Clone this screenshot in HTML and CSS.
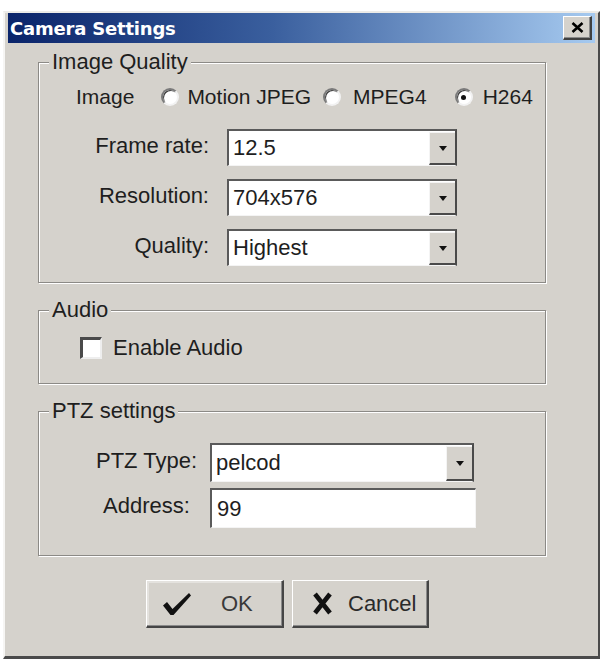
FILE: index.html
```html
<!DOCTYPE html>
<html lang="en">
<head>
<meta charset="utf-8">
<title>Camera Settings</title>
<link rel="stylesheet" href="styles.css">
</head>
<body>
<div class="dialog">
  <div class="titlebar">
    <span class="title">Camera Settings</span>
    <div class="close">
      <svg width="13" height="11" viewBox="0 0 13 11"><path d="M1.5 1 L11.5 10 M11.5 1 L1.5 10" stroke="#000" stroke-width="2.6" fill="none"/></svg>
    </div>
  </div>
  <div class="body">
    <fieldset class="group g-image">
      <legend>Image Quality</legend>
      <div class="radio-row">
        <span class="lbl-image">Image</span>
        <span class="radio r1"></span><span class="rtext t1">Motion JPEG</span>
        <span class="radio r2"></span><span class="rtext t2">MPEG4</span>
        <span class="radio r3 checked"></span><span class="rtext t3">H264</span>
      </div>
      <div class="form-row first">
        <span class="label">Frame rate:</span>
        <div class="select s-img"><span class="value">12.5</span><span class="drop"><i class="arrow"></i></span></div>
      </div>
      <div class="form-row">
        <span class="label">Resolution:</span>
        <div class="select s-img"><span class="value">704x576</span><span class="drop"><i class="arrow"></i></span></div>
      </div>
      <div class="form-row">
        <span class="label">Quality:</span>
        <div class="select s-img"><span class="value">Highest</span><span class="drop"><i class="arrow"></i></span></div>
      </div>
    </fieldset>

    <fieldset class="group g-audio">
      <legend>Audio</legend>
      <div class="check-row">
        <span class="checkbox"></span><span class="ctext">Enable Audio</span>
      </div>
    </fieldset>

    <fieldset class="group g-ptz">
      <legend>PTZ settings</legend>
      <div class="ptz-row first">
        <span class="plabel">PTZ Type:</span>
        <div class="select s-ptz"><span class="value">pelcod</span><span class="drop"><i class="arrow"></i></span></div>
      </div>
      <div class="ptz-row second">
        <span class="plabel">Address:</span>
        <div class="textbox"><span class="value">99</span></div>
      </div>
    </fieldset>

    <div class="buttons">
      <div class="btn ok">
        <svg class="ico-check" width="32" height="26" viewBox="0 0 32 26"><path d="M2 14.5 L6 11 L11.5 18 L28 2 L30 4.5 L12.5 24 L9.5 24 Z" fill="#111"/></svg>
        <span class="btext ok-text">OK</span>
      </div>
      <div class="btn cancel">
        <svg class="ico-x" width="21" height="23" viewBox="0 0 21 23"><path d="M3 2 L18 21 M18 2 L3 21" stroke="#111" stroke-width="4.6" fill="none"/></svg>
        <span class="btext cancel-text">Cancel</span>
      </div>
    </div>
  </div>
</div>
</body>
</html>
```
FILE: styles.css
```css
html, body {
  margin: 0;
  padding: 0;
  background: #ffffff;
}
body {
  font-family: "Liberation Sans", Arial, sans-serif;
  font-size: 22px;
  color: #1e1e1e;
}
.dialog {
  box-sizing: border-box;
  margin: 11px 0 0 3px;
  width: 597px;
  height: 648px;
  background: #d5d2cc;
  border-top: 2px solid #ecebe8;
  border-left: 2px solid #f6f5f3;
  border-right: 2px solid #4a4a4a;
  border-bottom: 3px solid #4a4a4a;
  padding: 0 3px;
  display: flex;
  flex-direction: column;
}
.titlebar {
  height: 30px;
  flex: none;
  display: flex;
  align-items: center;
  justify-content: space-between;
  background: linear-gradient(to right, #0a246a 0%, #3a5f9e 45%, #a6caf0 100%);
  padding: 0 3px 0 2px;
}
.title {
  font-family: "DejaVu Sans", Verdana, sans-serif;
  font-weight: bold;
  font-size: 18px;
  letter-spacing: -0.2px;
  color: #ffffff;
}
.close {
  box-sizing: border-box;
  width: 29px;
  height: 24px;
  background: #d5d2cc;
  border-top: 1px solid #ffffff;
  border-left: 1px solid #ffffff;
  border-right: 2px solid #404040;
  border-bottom: 2px solid #404040;
  box-shadow: inset -1px -1px 0 #8a8a8a;
  display: flex;
  align-items: center;
  justify-content: center;
}
.body {
  padding: 8px 49px 0 30px;
  display: flex;
  flex-direction: column;
}
.group {
  margin: 0;
  padding: 0;
  min-width: 0;
  border: 1px solid #8c8a86;
  box-shadow: 1px 1px 0 #ffffff, inset 1px 1px 0 #ffffff;
}
.group legend {
  margin-left: 10px;
  padding: 0 3px;
  line-height: 22px;
  background: #d5d2cc;
}
.g-image {
  padding: 10px 0 16px 0;
}
.g-audio {
  margin-top: 16px;
  padding: 15px 0 24px 0;
}
.g-ptz {
  margin-top: 16px;
  padding: 21px 0 27px 0;
}
.radio-row {
  display: flex;
  align-items: center;
  height: 28px;
  padding-left: 37px;
  font-size: 21px;
}
.radio {
  box-sizing: border-box;
  flex: none;
  width: 18px;
  height: 18px;
  border-radius: 50%;
  background: #ffffff;
  border: 2px solid;
  border-color: #7a7a7a #f2f2f2 #f2f2f2 #7a7a7a;
  box-shadow: inset 1px 1px 0 #3c3c3c;
  display: flex;
  align-items: center;
  justify-content: center;
}
.radio.checked::after {
  content: "";
  width: 5px;
  height: 5px;
  border-radius: 50%;
  background: #111;
}
.r1 { margin-left: 27px; }
.t1 { margin-left: 8px; }
.r2 { margin-left: 12px; }
.t2 { margin-left: 12px; }
.r3 { margin-left: 28px; }
.t3 { margin-left: 10px; }
.form-row {
  display: flex;
  align-items: center;
  margin-top: 13px;
}
.form-row.first {
  margin-top: 18px;
}
.label {
  width: 170px;
  text-align: right;
  padding-bottom: 4px;
}
.select {
  box-sizing: border-box;
  height: 37px;
  background: #ffffff;
  border-top: 2px solid #5a5a5a;
  border-left: 2px solid #5a5a5a;
  border-right: 2px solid #4a4a4a;
  border-bottom: 1px solid #f4f4f4;
  display: flex;
  align-items: stretch;
}
.s-img {
  width: 230px;
  margin-left: 18px;
}
.value {
  flex: 1;
  display: flex;
  align-items: center;
  padding-left: 4px;
}
.drop {
  box-sizing: border-box;
  width: 26px;
  margin: 1px 0 0 0;
  background: #d5d2cc;
  border-top: 1px solid #f4f4f4;
  border-left: 1px solid #f4f4f4;
  border-bottom: 2px solid #4a4a4a;
  display: flex;
  align-items: center;
  justify-content: center;
}
.arrow {
  width: 0;
  height: 0;
  border-left: 4px solid transparent;
  border-right: 4px solid transparent;
  border-top: 5px solid #111;
}
.check-row {
  display: flex;
  align-items: center;
  height: 23px;
  padding-left: 41px;
}
.checkbox {
  box-sizing: border-box;
  width: 22px;
  height: 22px;
  background: #ffffff;
  border-top: 3px solid #4a4a4a;
  border-left: 3px solid #4a4a4a;
  border-right: 2px solid #eeeeee;
  border-bottom: 2px solid #eeeeee;
}
.ctext {
  margin-left: 11px;
}
.ptz-row {
  display: flex;
  align-items: center;
}
.ptz-row.second {
  margin-top: 6px;
}
.plabel {
  margin-left: 54px;
  width: 107px;
  text-align: center;
  padding-bottom: 4px;
}
.s-ptz {
  width: 264px;
  height: 39px;
  margin-left: 10px;
}
.textbox {
  box-sizing: border-box;
  width: 266px;
  height: 40px;
  margin-left: 10px;
  background: #ffffff;
  border-top: 2px solid #5a5a5a;
  border-left: 2px solid #5a5a5a;
  border-right: 1px solid #f4f4f4;
  border-bottom: 1px solid #f4f4f4;
  display: flex;
  align-items: stretch;
}
.textbox .value {
  padding-left: 5px;
}
.buttons {
  display: flex;
  margin-top: 24px;
  margin-left: 108px;
  gap: 8px;
}
.btn {
  box-sizing: border-box;
  height: 48px;
  background: #d5d2cc;
  border-top: 1px solid #ffffff;
  border-left: 1px solid #ffffff;
  border-right: 2px solid #454545;
  border-bottom: 2px solid #454545;
  box-shadow: inset -1px -1px 0 #8a8a8a;
  display: flex;
  align-items: center;
}
.ok {
  width: 138px;
  box-shadow: inset -1px -1px 0 #8a8a8a, inset 2px 2px 0 #e4e2de;
}
.cancel {
  width: 137px;
}
.ico-check {
  margin-left: 14px;
}
.ok-text {
  margin-left: 28px;
  color: #3a3a3a;
}
.ico-x {
  margin-left: 19px;
}
.cancel-text {
  margin-left: 15px;
  color: #2a2a2a;
}
```
